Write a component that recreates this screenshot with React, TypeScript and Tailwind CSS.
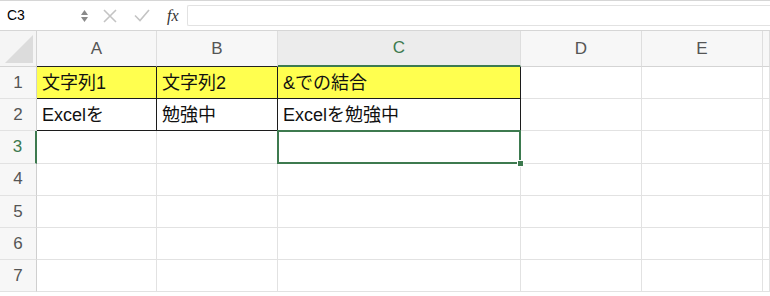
import React from 'react';

const cols = ['A', 'B', 'C', 'D', 'E', ''];
const rows = [1, 2, 3, 4, 5, 6, 7];

const data: Record<string, string> = {
  A1: '文字列1',
  B1: '文字列2',
  C1: '&での結合',
  A2: 'Excelを',
  B2: '勉強中',
  C2: 'Excelを勉強中',
};

const font = { fontFamily: '"Liberation Sans", "Noto Sans CJK JP", sans-serif' };

const FormulaBar: React.FC = () => (
  <div className="h-[31px] flex items-center border-t border-b border-[#d6d6d6] bg-white">
    <div className="w-[92px] flex items-center justify-between pl-[7px] pr-[4px]">
      <span className="text-[14px] text-black">C3</span>
      <span className="flex flex-col items-center gap-[2px] text-[#8a8a8a]">
        <svg width="7" height="5" viewBox="0 0 7 5"><path d="M3.5 0L7 5H0z" fill="currentColor" /></svg>
        <svg width="7" height="5" viewBox="0 0 7 5"><path d="M0 0h7L3.5 5z" fill="currentColor" /></svg>
      </span>
    </div>
    <div className="flex items-center gap-[17px] pl-[11px]">
      <svg width="14" height="14" viewBox="0 0 14 14"><path d="M1 1l12 12M13 1L1 13" stroke="#c4c4c4" strokeWidth="1.6" /></svg>
      <svg width="16" height="13" viewBox="0 0 16 13"><path d="M1 6.5l5 5L15 1" stroke="#c4c4c4" strokeWidth="1.6" fill="none" /></svg>
      <span className="text-[16px] italic text-[#333]" style={{ fontFamily: '"Liberation Serif", serif' }}>fx</span>
    </div>
    <div className="ml-[8px] flex-1 h-[21px] border border-[#e2e2e2] border-r-0 rounded-l-[2px]" />
  </div>
);

const App: React.FC = () => {
  return (
    <div className="w-[770px] h-[296px] overflow-hidden bg-white" style={font}>
      <FormulaBar />
      <div className="grid grid-cols-[37px_120px_121px_243px_121px_121px_1fr] grid-rows-[36px] auto-rows-[32.2px]">
        {/* corner */}
        <div className="bg-[#f5f5f5] border-r border-b border-[#d4d4d4] flex items-end justify-end p-[3px]">
          <svg width="28" height="28" viewBox="0 0 28 28"><path d="M28 0V28H0z" fill="#dcdcdc" /></svg>
        </div>
        {cols.map((c, i) => {
          const sel = c === 'C';
          const boxed = i < 3;
          return (
            <div
              key={'h' + i}
              className={`flex items-center justify-center text-[17px] border-r border-[#dedede] ${
                sel
                  ? 'bg-[#ececec] text-[#3d7a4f] border-b-2 border-b-[#3d7a4f]'
                  : boxed
                  ? 'bg-[#f7f7f7] text-[#555] border-b border-b-[#222]'
                  : 'bg-[#f7f7f7] text-[#555] border-b border-b-[#d4d4d4]'
              }`}
            >
              {c}
            </div>
          );
        })}
        {rows.map((r) => (
          <React.Fragment key={r}>
            <div
              className={`flex items-center justify-center text-[17px] bg-[#f7f7f7] border-b border-[#e2e2e2] ${
                r === 3
                  ? 'text-[#3d7a4f] border-r-2 border-r-[#3d7a4f]'
                  : 'text-[#555] border-r border-r-[#cfcfcf]'
              }`}
            >
              {r}
            </div>
            {cols.map((c, i) => {
              const id = c + r;
              const inBox = r <= 2 && i < 3;
              const isSel = id === 'C3';
              return (
                <div
                  key={id + i}
                  className={`relative flex items-center pl-[5px] pt-[1px] text-[18px] text-[#111] whitespace-nowrap ${
                    r === 1 && i < 3 ? 'bg-[#ffff4f]' : 'bg-white'
                  } ${inBox ? 'border-r border-b border-[#1c1c1c]' : 'border-r border-b border-[#e2e2e2]'} ${
                    isSel ? 'z-10' : ''
                  }`}
                >
                  {data[id] ?? ''}
                  {isSel && (
                    <>
                      <div className="absolute -left-[1px] -top-[1px] -right-[1px] -bottom-[1px] border-2 border-[#3d7a4f] pointer-events-none" />
                      <div className="absolute -right-[4px] -bottom-[4px] w-[7px] h-[7px] bg-[#3d7a4f] border border-white" />
                    </>
                  )}
                </div>
              );
            })}
          </React.Fragment>
        ))}
      </div>
    </div>
  );
};

export default App;
